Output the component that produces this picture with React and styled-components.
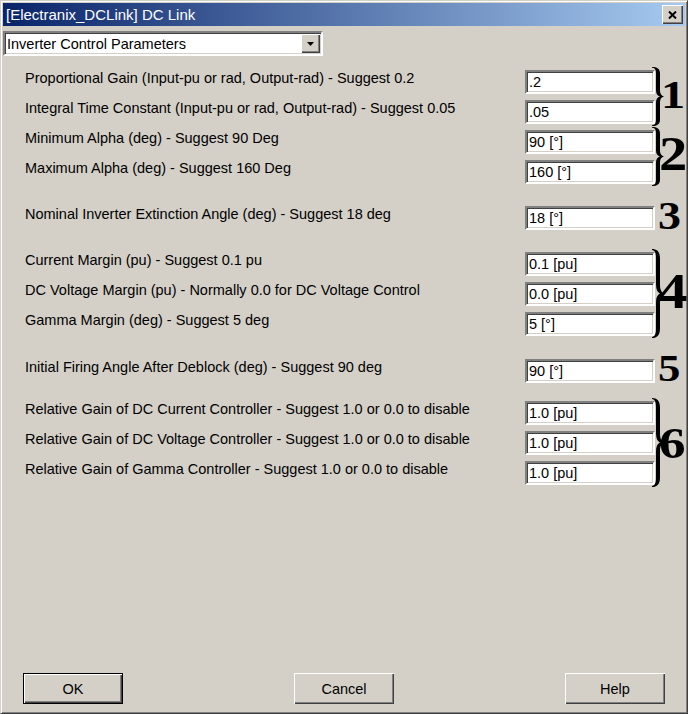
import React from "react";
import styled, { createGlobalStyle } from "styled-components";

const Global = createGlobalStyle`
  html, body { margin: 0; padding: 0; background: #d4d0c8; }
  body { font-family: "Liberation Sans", Arial, sans-serif; }
`;

const Window = styled.div`
  width: 688px;
  height: 714px;
  box-sizing: border-box;
  background: #d4d0c8;
  border: 1px solid;
  border-color: #d4d0c8 #404040 #404040 #d4d0c8;
  box-shadow: inset 1px 1px 0 #ffffff, inset -1px -1px 0 #808080;
  padding: 2px;
  display: flex;
  flex-direction: column;
  font-family: "Liberation Sans", Arial, sans-serif;
  font-size: 14.5px;
  color: #000;
`;

const TitleBar = styled.div`
  height: 23px;
  flex: none;
  display: flex;
  align-items: center;
  justify-content: space-between;
  padding: 0 2px 0 3px;
  background: linear-gradient(to right, #0a246a, #a6caf0);
  color: #fff;
  font-size: 15px;
`;

const CloseButton = styled.div`
  width: 21px;
  height: 19px;
  box-sizing: border-box;
  background: #d4d0c8;
  box-shadow: inset 1px 1px 0 #ffffff, inset -1px -1px 0 #404040, inset -2px -2px 0 #808080;
  display: flex;
  align-items: center;
  justify-content: center;
`;

const Body = styled.div`
  flex: 1;
  display: flex;
  flex-direction: column;
  padding-top: 5px;
`;

const Select = styled.div`
  width: 320px;
  height: 25px;
  box-sizing: border-box;
  background: #fff;
  border: 2px solid;
  border-color: #808080 #ffffff #ffffff #808080;
  box-shadow: inset 1px 1px 0 #404040, inset -1px -1px 0 #d4d0c8;
  display: flex;
  align-items: stretch;
  padding: 1px 1px 1px 2px;
`;

const SelectText = styled.div`
  flex: 1;
  display: flex;
  align-items: center;
`;

const SelectButton = styled.div`
  width: 19px;
  box-sizing: border-box;
  background: #d4d0c8;
  box-shadow: inset 1px 1px 0 #ffffff, inset -1px -1px 0 #404040, inset -2px -2px 0 #808080;
  display: flex;
  align-items: center;
  justify-content: center;
`;

const Form = styled.div`
  display: flex;
  flex-direction: column;
  padding-left: 22px;
  margin-top: 14px;
`;

const Section = styled.div`
  display: grid;
  grid-template-columns: 500px 130px 1fr;
  grid-auto-rows: 24px;
  row-gap: 6px;
  margin-top: ${(p) => p.$top}px;
`;

const Label = styled.div`
  grid-column: 1;
  line-height: 17px;
  align-self: start;
  white-space: nowrap;
`;

const Field = styled.div`
  grid-column: 2;
  height: 24px;
  box-sizing: border-box;
  background: #fff;
  border: 2px solid;
  border-color: #808080 #ffffff #ffffff #808080;
  box-shadow: inset 1px 1px 0 #404040, inset -1px -1px 0 #d4d0c8;
  padding: 0 2px 0 2px;
  display: flex;
  align-items: center;
  white-space: nowrap;
`;

const Mark = styled.div`
  grid-column: 3;
  grid-row: 1 / span ${(p) => p.$rows};
  display: flex;
  align-items: stretch;
  min-height: 0;
`;

const BraceBox = styled.div`
  position: relative;
  width: 12px;
  margin: -3px 0 -2px -3px;
  flex: none;
  svg {
    position: absolute;
    inset: 0;
    width: 100%;
    height: 100%;
  }
`;

const Numeral = styled.div`
  align-self: center;
  font-family: "Liberation Serif", "Times New Roman", serif;
  font-weight: bold;
  font-size: ${(p) => p.$size}px;
  line-height: 20px;
  margin-left: ${(p) => p.$left}px;
  margin-top: ${(p) => p.$dy || 0}px;
  transform: scaleX(1.18);
  transform-origin: left center;
`;

const Footer = styled.div`
  display: flex;
  justify-content: space-between;
  padding: 0 20px 7px 20px;
`;

const Button = styled.div`
  width: 100px;
  height: 31px;
  box-sizing: border-box;
  display: flex;
  align-items: center;
  justify-content: center;
  border: ${(p) => (p.$default ? "1px solid #000" : "none")};
  box-shadow: inset 1px 1px 0 #ffffff, inset -1px -1px 0 #404040, inset -2px -2px 0 #808080;
`;

const Brace = () => (
  <BraceBox>
    <svg viewBox="0 0 12 100" preserveAspectRatio="none">
      <path
        d="M0,0 C5,0 8,3 8,11 L8,40 C8,46 9.5,49 12,50 C9.5,51 8,54 8,60 L8,89 C8,97 5,100 0,100 L0,98.8 C2.6,98.6 4,96 4,90 L4,60 C4,54.5 5.5,51.2 8,50 C5.5,48.8 4,45.5 4,40 L4,10 C4,4 2.6,1.4 0,1.2 Z"
        fill="#000"
      />
    </svg>
  </BraceBox>
);

const sections = [
  {
    top: 0,
    brace: true,
    num: "1",
    size: 41,
    left: -3,
    dy: -6,
    rows: [
      ["Proportional Gain (Input-pu or rad, Output-rad) - Suggest 0.2", ".2"],
      ["Integral Time Constant (Input-pu or rad, Output-rad) - Suggest 0.05", ".05"],
    ],
  },
  {
    top: 6,
    brace: true,
    num: "2",
    size: 48,
    left: -5,
    dy: -6,
    rows: [
      ["Minimum Alpha (deg) - Suggest 90 Deg", "90 [°]"],
      ["Maximum Alpha (deg) - Suggest 160 Deg", "160 [°]"],
    ],
  },
  {
    top: 22,
    brace: false,
    num: "3",
    size: 39,
    left: 3,
    dy: -4,
    rows: [["Nominal Inverter Extinction Angle (deg) - Suggest 18 deg", "18 [°]"]],
  },
  {
    top: 22,
    brace: true,
    num: "4",
    size: 50,
    left: -6,
    dy: -6,
    rows: [
      ["Current Margin (pu) - Suggest 0.1 pu", "0.1 [pu]"],
      ["DC Voltage Margin (pu) - Normally 0.0 for DC Voltage Control", "0.0 [pu]"],
      ["Gamma Margin (deg) - Suggest 5 deg", "5 [°]"],
    ],
  },
  {
    top: 23,
    brace: false,
    num: "5",
    size: 38,
    left: 3,
    dy: -6,
    rows: [["Initial Firing Angle After Deblock (deg) - Suggest 90 deg", "90 [°]"]],
  },
  {
    top: 18,
    brace: true,
    num: "6",
    size: 45,
    left: -5,
    dy: 0,
    rows: [
      ["Relative Gain of DC Current Controller - Suggest 1.0 or 0.0 to disable", "1.0 [pu]"],
      ["Relative Gain of DC Voltage Controller - Suggest 1.0 or 0.0 to disable", "1.0 [pu]"],
      ["Relative Gain of Gamma Controller - Suggest 1.0 or 0.0 to disable", "1.0 [pu]"],
    ],
  },
];

export default function App() {
  return (
    <>
      <Global />
      <Window>
        <TitleBar>
          <span>[Electranix_DCLink] DC Link</span>
          <CloseButton>
            <svg width="9" height="8" viewBox="0 0 9 8">
              <path d="M1,0.5 L8,7.5 M8,0.5 L1,7.5" stroke="#000" strokeWidth="2" />
            </svg>
          </CloseButton>
        </TitleBar>
        <Body>
          <Select>
            <SelectText>Inverter Control Parameters</SelectText>
            <SelectButton>
              <svg width="7" height="4" viewBox="0 0 7 4">
                <path d="M0,0 L7,0 L3.5,4 Z" fill="#000" />
              </svg>
            </SelectButton>
          </Select>
          <Form>
            {sections.map((s, i) => (
              <Section key={i} $top={s.top}>
                {s.rows.map(([label, value], j) => (
                  <React.Fragment key={j}>
                    <Label style={{ gridRow: j + 1 }}>{label}</Label>
                    <Field style={{ gridRow: j + 1 }}>{value}</Field>
                  </React.Fragment>
                ))}
                <Mark $rows={s.rows.length}>
                  {s.brace && <Brace />}
                  <Numeral $size={s.size} $left={s.left} $dy={s.dy}>
                    {s.num}
                  </Numeral>
                </Mark>
              </Section>
            ))}
          </Form>
          <div style={{ flex: 1 }} />
          <Footer>
            <Button $default>OK</Button>
            <Button>Cancel</Button>
            <Button>Help</Button>
          </Footer>
        </Body>
      </Window>
    </>
  );
}
